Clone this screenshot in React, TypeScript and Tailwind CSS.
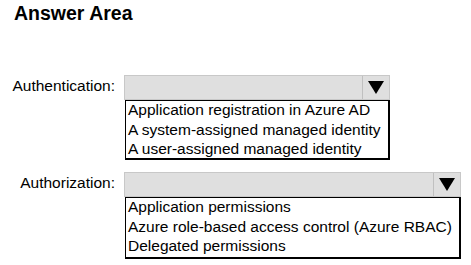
import React from 'react';

interface DropdownProps {
  label: string;
  widthClass: string;
  listClass: string;
  options: string[];
}

const Arrow: React.FC = () => (
  <svg width="16" height="13" viewBox="0 0 16 13">
    <polygon points="0,0 16,0 8,13" fill="#000" />
  </svg>
);

const Dropdown: React.FC<DropdownProps> = ({ label, widthClass, listClass, options }) => {
  return (
    <div className="flex items-start">
      <div className="w-[116px] pr-[1px] text-right text-[15.5px] leading-[21px] text-black">{label}</div>
      <div className={`ml-[8px] flex flex-col ${widthClass}`}>
        <div className="flex h-[25px] border border-[#c8c8c8] bg-[#dfdfdf]">
          <div className="flex-1" />
          <div className="flex w-[27px] items-center justify-center border-l border-[#c0c0c0]">
            <Arrow />
          </div>
        </div>
        <div className={`ml-[1px] overflow-hidden border border-r-2 border-b-2 border-black bg-white pl-[2px] ${listClass}`}>
          <div className="-mt-[1px] text-[15.5px] leading-[19.5px] text-black">
            {options.map((opt) => (
              <div key={opt} className="whitespace-nowrap">{opt}</div>
            ))}
          </div>
        </div>
      </div>
    </div>
  );
};

const App: React.FC = () => {
  return (
    <div className="h-[265px] w-[471px] bg-white font-['Liberation_Sans',Arial,sans-serif]">
      <div className="pl-[14px] pt-[2px] text-[19.5px] font-bold leading-[22px] text-black">Answer Area</div>
      <div className="mt-[51px]">
        <Dropdown
          label="Authentication:"
          widthClass="w-[266px]"
          listClass="h-[60px]"
          options={[
            'Application registration in Azure AD',
            'A system-assigned managed identity',
            'A user-assigned managed identity',
          ]}
        />
      </div>
      <div className="mt-[12px]">
        <Dropdown
          label="Authorization:"
          widthClass="w-[337px]"
          listClass="h-[62px]"
          options={[
            'Application permissions',
            'Azure role-based access control (Azure RBAC)',
            'Delegated permissions',
          ]}
        />
      </div>
    </div>
  );
};

export default App;
